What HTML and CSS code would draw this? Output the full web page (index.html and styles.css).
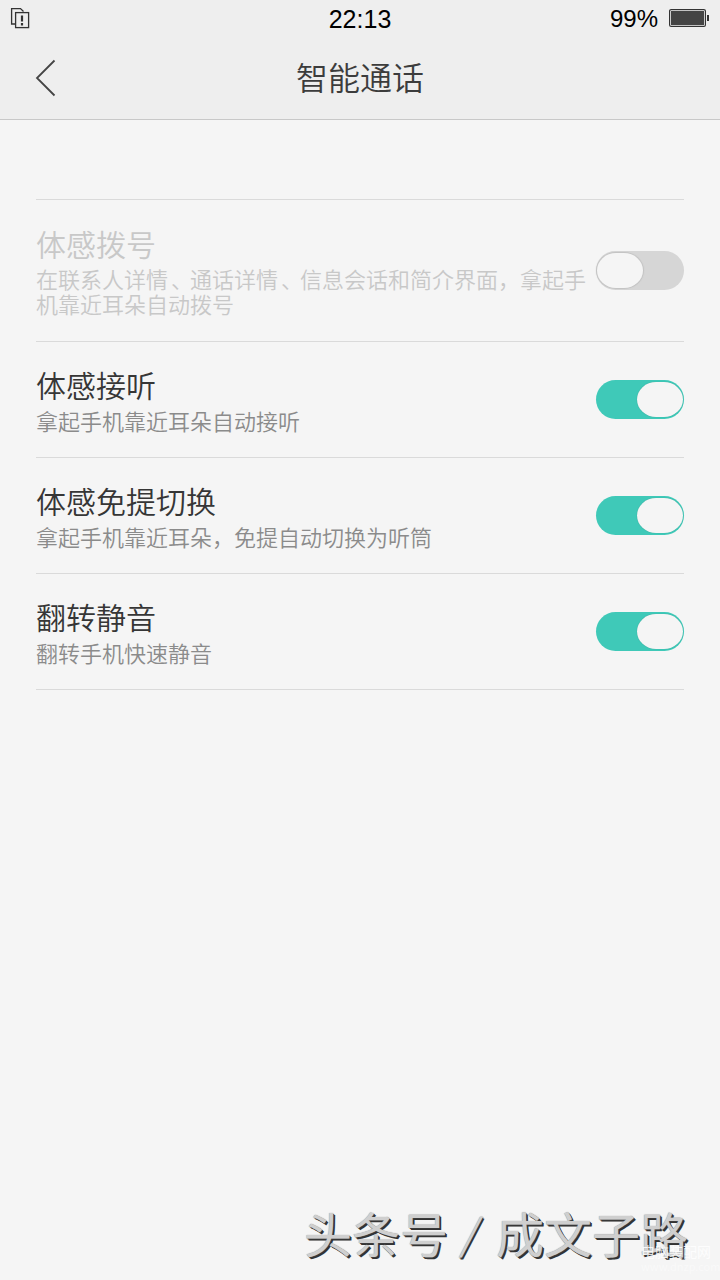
FILE: index.html
```html
<!DOCTYPE html>
<html lang="zh-CN">
<head>
<meta charset="utf-8">
<title>智能通话</title>
<link rel="stylesheet" href="styles.css">
</head>
<body>
<div class="screen">
  <header class="header">
    <div class="status">
      <svg class="status-icon" width="20" height="22" viewBox="0 0 20 22" fill="none" stroke="#333" stroke-width="1.3"><path d="M5 17H1.6V1.6H10.5L13.5 4.5"/><rect x="5.6" y="5.6" width="13" height="15"/><path d="M12 8.5v6M12 16v2.4" stroke-width="2.2"/></svg>
      <span class="clock">22:13</span>
      <div class="power"><span class="percent">99%</span><svg class="battery" width="40" height="20" viewBox="0 0 40 20"><rect x=".6" y="1.6" width="35.8" height="16.8" rx="1.5" fill="#f4f4f4" stroke="#333" stroke-width="1.2"/><rect x="2" y="3" width="33" height="14" fill="#444"/><rect x="38" y="7" width="2" height="6" fill="#333"/></svg></div>
    </div>
    <div class="bar">
      <svg class="back" width="22" height="38" viewBox="0 0 22 38" fill="none" stroke="#444" stroke-width="1.8"><path d="M19.5 1.5L2 19l17.5 17.5"/></svg>
      <h1 class="title">智能通话</h1>
    </div>
  </header>
  <main class="list">
    <section class="row row-tall disabled">
      <div class="text"><h2 class="name">体感拨号</h2><p class="desc">在联系人详情<span class="comma">、</span>通话详情<span class="comma">、</span>信息会话和简介界面，拿起手机靠近耳朵自动拨号</p></div>
      <div class="switch"><i class="knob"></i></div>
    </section>
    <section class="row">
      <div class="text"><h2 class="name">体感接听</h2><p class="desc">拿起手机靠近耳朵自动接听</p></div>
      <div class="switch on"><i class="knob"></i></div>
    </section>
    <section class="row">
      <div class="text"><h2 class="name">体感免提切换</h2><p class="desc">拿起手机靠近耳朵，免提自动切换为听筒</p></div>
      <div class="switch on"><i class="knob"></i></div>
    </section>
    <section class="row">
      <div class="text"><h2 class="name">翻转静音</h2><p class="desc">翻转手机快速静音</p></div>
      <div class="switch on"><i class="knob"></i></div>
    </section>
  </main>
  <div class="credit"><span>头条号</span><span class="slash">/</span><span>成文子路</span></div>
  <div class="stamp"><div>电脑装配网</div><div class="stamp-url">www.dnzp.com</div></div>
</div>
</body>
</html>
```
FILE: styles.css
```css
* { box-sizing: border-box; margin: 0; padding: 0; }
body { background: #f5f5f5; font-family: "Noto Sans CJK SC", sans-serif; }
.screen { position: relative; width: 720px; height: 1280px; overflow: hidden; background: #f5f5f5; }
.header { height: 120px; background: #eee; border-bottom: 1px solid #c8c8c8; }
.status { display: grid; grid-template-columns: 1fr auto 1fr; align-items: center; height: 36px; padding: 0 11px 0 10px; font-family: "Liberation Sans", sans-serif; font-size: 25px; line-height: 36px; color: #000; }
.status-icon { margin-top: -1px; }
.clock { padding: 1px 0 0 1px; }
.percent { font-size: 24px; }
.power { display: flex; align-items: center; justify-content: flex-end; gap: 11px; height: 36px; }
.battery { margin-top: -1px; }
.bar { display: grid; grid-template-columns: 60px 1fr 60px; align-items: center; height: 84px; }
.back { margin-left: 35px; }
.title { margin-top: -4px; font-size: 32px; font-weight: 350; line-height: 40px; text-align: center; color: #3c3c3c; }
.list { margin: 79px 36px 0; border-top: 1px solid #dadada; }
.row { display: flex; justify-content: space-between; height: 116px; padding-top: 24px; border-bottom: 1px solid #dadada; color: #363636; }
.row-tall { height: 142px; padding-top: 25px; }
.text { width: 560px; white-space: nowrap; }
.name { font-size: 30px; font-weight: 350; line-height: 36px; }
.desc { margin-top: 6px; font-size: 22px; font-weight: 350; line-height: 25px; color: #8b8b8b; }
.disabled .desc { width: 555px; margin-top: 5px; white-space: normal; }
.disabled, .disabled .desc { color: #c8c8c8; }
.comma { margin-left: 3px; letter-spacing: -3px; }
.switch { flex: none; width: 88px; height: 39px; margin-top: 14px; padding: 1px; border-radius: 20px; background: #d6d6d6; display: flex; align-items: center; }
.row-tall .switch { margin-top: 26px; }
.switch.on { justify-content: flex-end; background: #3fc9b8; }
.knob { width: 46px; height: 35px; border-radius: 19px / 17.5px; background: #f5f5f5; box-shadow: 0 0 1px 1px #c2c2c2; }
.on .knob { box-shadow: 0 0 1px 0 #2a9a8c; }
.credit { position: absolute; left: 304px; top: 1196px; display: flex; font-size: 48px; line-height: 72px; color: #cfcfcf; text-shadow: 0 0 1px #888, 1px 1px 0 #333, 2px 2px 0 #333; }
.slash { width: 48px; font-size: 42px; text-align: center; transform: skewX(-12deg); }
.stamp { position: absolute; left: 641px; top: 1242px; font-size: 14px; line-height: 18px; color: rgba(255,255,255,.85); white-space: nowrap; }
.stamp-url { font-size: 11px; line-height: 12px; color: rgba(255,255,255,.45); }
```
